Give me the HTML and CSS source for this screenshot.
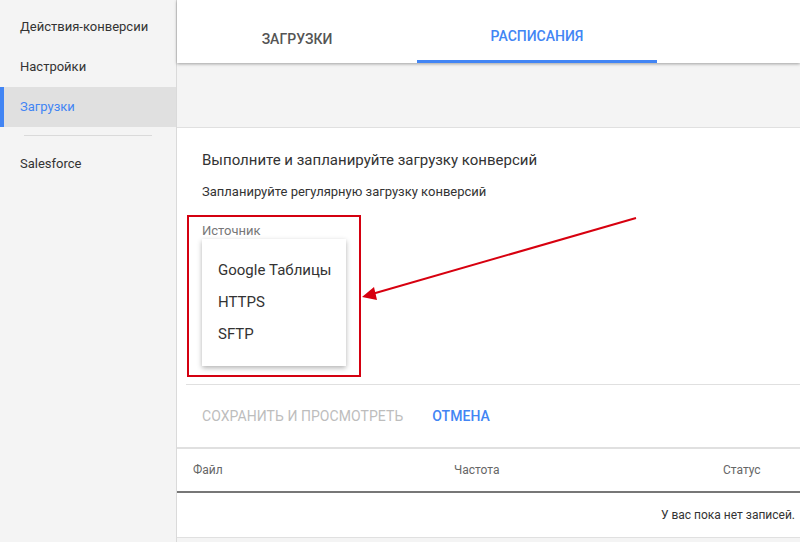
FILE: index.html
```html
<!DOCTYPE html>
<html lang="ru">
<head>
  <meta charset="UTF-8">
  <title>Загрузки конверсий</title>
  <link rel="stylesheet" href="styles.css">
</head>
<body>
  <div class="page">
    <!-- Sidebar -->
    <div class="sidebar">
      <div class="nav-item">Действия-конверсии</div>
      <div class="nav-item">Настройки</div>
      <div class="nav-item active">Загрузки</div>
      <div class="nav-divider"></div>
      <div class="nav-item">Salesforce</div>
    </div>

    <!-- Main -->
    <div class="main">
      <div class="tabs">
        <div class="tab">Загрузки</div>
        <div class="tab active">Расписания</div>
      </div>
      <div class="band"></div>

      <div class="card">
        <div class="card-body">
          <div class="card-title">Выполните и запланируйте загрузку конверсий</div>
          <div class="card-subtitle">Запланируйте регулярную загрузку конверсий</div>
          <div class="field highlight">
            <div class="field-label">Источник</div>
            <div class="menu">
              <div class="menu-item">Google Таблицы</div>
              <div class="menu-item">HTTPS</div>
              <div class="menu-item">SFTP</div>
            </div>
          </div>
        </div>
        <div class="actions">
          <span class="btn disabled">Сохранить и просмотреть</span>
          <span class="btn primary">Отмена</span>
        </div>
      </div>

      <div class="table">
        <div class="table-head">
          <div>Файл</div>
          <div>Частота</div>
          <div>Статус</div>
        </div>
        <div class="table-empty">У вас пока нет записей.</div>
      </div>
    </div>

    <!-- annotation arrow -->
    <svg class="arrow" width="800" height="542" viewBox="0 0 800 542">
      <line x1="636" y1="218" x2="372" y2="294" stroke="#d7000f" stroke-width="2"/>
      <polygon points="362,297 374,287 377,300" fill="#d7000f"/>
    </svg>
  </div>
</body>
</html>
```

FILE: styles.css
```css
body {
  margin: 0;
  font-family: Roboto, "Liberation Sans", Arial, sans-serif;
  color: #333;
  background: #f4f4f4;
}
.page {
  position: relative;
  display: flex;
  width: 800px;
  height: 542px;
  overflow: hidden;
}
.sidebar {
  width: 176px;
  flex-shrink: 0;
  background: #f4f4f4;
  border-right: 1px solid #dadada;
  padding-top: 7px;
}
.nav-item {
  height: 40px;
  line-height: 40px;
  padding-left: 20px;
  font-size: 13px;
  color: #333;
}
.nav-item.active {
  background: #e0e0e0;
  color: #4285f4;
  border-left: 4px solid #4285f4;
  padding-left: 16px;
}
.nav-divider {
  height: 1px;
  background: #dadada;
  margin: 8px 24px 8px 24px;
}
.main {
  flex: 1;
  display: flex;
  flex-direction: column;
  min-width: 0;
}
.tabs {
  display: flex;
  height: 63px;
  background: #fff;
  box-shadow: 0 1px 3px rgba(0, 0, 0, 0.35);
  position: relative;
  z-index: 1;
}
.tab {
  width: 240px;
  box-sizing: border-box;
  display: flex;
  align-items: center;
  justify-content: center;
  padding-top: 15px;
  font-size: 14px;
  font-weight: 500;
  text-transform: uppercase;
  color: #555;
}
.tab.active {
  color: #4285f4;
  border-bottom: 3px solid #4285f4;
  padding-top: 12px;
}
.band {
  height: 64px;
  background: #f4f4f4;
}
.card {
  background: #fff;
  border-top: 1px solid #e0e0e0;
  border-bottom: 2px solid #e0e0e0;
}
.card-body {
  padding: 22px 0 7px 25px;
}
.card-title {
  font-size: 15px;
  line-height: 20px;
  color: #333;
}
.card-subtitle {
  font-size: 13px;
  line-height: 18px;
  margin-top: 13px;
  color: #333;
}
.field {
  margin: 14px 0 0 -15px;
  padding: 6px 0 9px 13px;
}
.highlight {
  border: 2px solid #d40010;
  width: 157px;
}
.field-label {
  font-size: 13px;
  line-height: 16px;
  color: #777;
}
.menu {
  width: 144px;
  height: 127px;
  box-sizing: border-box;
  padding-top: 15px;
  background: #fff;
  box-shadow: 0 2px 5px rgba(0, 0, 0, 0.3);
}
.menu-item {
  height: 32px;
  line-height: 32px;
  padding: 0 16px;
  font-size: 15px;
  white-space: nowrap;
  color: #333;
}
.actions {
  margin-left: 9px;
  border-top: 1px solid #e0e0e0;
  height: 62px;
  display: flex;
  align-items: center;
  gap: 29px;
  padding-left: 16px;
}
.btn {
  font-size: 14px;
  letter-spacing: 0.05px;
  text-transform: uppercase;
}
.btn.disabled {
  color: #bdbdbd;
}
.btn.primary {
  color: #4285f4;
  font-weight: 500;
}
.table {
  background: #fff;
  border-bottom: 1px solid #e0e0e0;
}
.table-head {
  display: grid;
  grid-template-columns: 261px 269px 1fr;
  height: 42px;
  align-items: center;
  padding-left: 16px;
  font-size: 12px;
  color: #666;
  border-bottom: 2px solid #777;
}
.table-empty {
  height: 44px;
  line-height: 44px;
  text-align: right;
  padding-right: 5px;
  font-size: 12px;
  color: #333;
}
.arrow {
  position: absolute;
  left: 0;
  top: 0;
  pointer-events: none;
}
```
